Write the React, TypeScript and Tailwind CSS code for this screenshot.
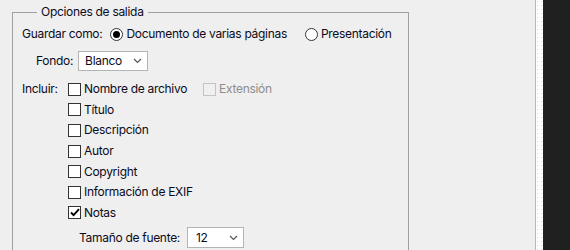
import React from "react";

const font = { fontFamily: "Inter, 'Noto Sans', sans-serif" };

function Check({ checked = false, disabled = false }: { checked?: boolean; disabled?: boolean }) {
  return (
    <span
      className={
        "inline-flex h-[13px] w-[13px] shrink-0 items-center justify-center border " +
        (disabled ? "border-[#c4c4c4] bg-[#f0f0f0]" : "border-[#333333] bg-white")
      }
    >
      {checked && (
        <svg width="10" height="9" viewBox="0 0 10 9">
          <path d="M1 4.5 L3.6 7.2 L9 1.2" fill="none" stroke="#000" strokeWidth="1.9" />
        </svg>
      )}
    </span>
  );
}

function Radio({ checked = false }: { checked?: boolean }) {
  return (
    <span className="inline-flex h-[13px] w-[13px] shrink-0 items-center justify-center rounded-full border border-[#333333] bg-white">
      {checked && <span className="h-[7px] w-[7px] rounded-full bg-black" />}
    </span>
  );
}

function Chevron() {
  return (
    <svg width="9" height="6" viewBox="0 0 9 6">
      <path d="M1 1 L4.5 4.5 L8 1" fill="none" stroke="#555" strokeWidth="1.2" />
    </svg>
  );
}

function Row({ label, checked = false }: { label: string; checked?: boolean }) {
  return (
    <div className="flex h-[20.6px] items-center pl-[55px]">
      <Check checked={checked} />
      <span className="ml-[3px]">{label}</span>
    </div>
  );
}

export default function App() {
  return (
    <div
      className="flex h-[250px] w-[570px] overflow-hidden whitespace-nowrap bg-[#efefef] text-[12px] leading-none tracking-[-0.3px] text-[#0b0b1c]"
      style={font}
    >
      <div className="flex-1">
        <fieldset className="ml-[12px] mt-[4px] h-[300px] w-[397px] border border-[#a0a0a0] pl-[9px]">
          <legend className="ml-[15px] h-[16px] px-[4px] leading-[16px] text-[#0b0b1c]">
            Opciones de salida
          </legend>
          <div className="mt-[4px] flex h-[20px] items-center">
            <span>Guardar como:</span>
            <span className="ml-[8px] flex items-center">
              <Radio checked />
              <span className="ml-[3px]">Documento de varias páginas</span>
            </span>
            <span className="ml-[18px] flex items-center">
              <Radio />
              <span className="ml-[3px]">Presentación</span>
            </span>
          </div>
          <div className="mt-[7px] flex h-[20px] items-center">
            <span className="ml-[14px]">Fondo:</span>
            <div className="ml-[5px] flex h-[20px] w-[70px] items-center justify-between border border-[#b4b4b4] bg-white pl-[6px] pr-[5px]">
              <span>Blanco</span>
              <Chevron />
            </div>
          </div>
          <div className="mt-[8px] flex h-[20.6px] items-center">
            <span className="w-[45px]">Incluir:</span>
            <span className="ml-[1px] flex items-center">
              <Check />
              <span className="ml-[3px]">Nombre de archivo</span>
            </span>
            <span className="ml-[16px] flex items-center">
              <Check disabled />
              <span className="ml-[3px] text-[#8d8d8d]">Extensión</span>
            </span>
          </div>
          <div className="-ml-[9px]">
            <Row label="Título" />
            <Row label="Descripción" />
            <Row label="Autor" />
            <Row label="Copyright" />
            <Row label="Información de EXIF" />
            <Row label="Notas" checked />
          </div>
          <div className="mt-[4px] flex h-[21px] items-center">
            <span className="ml-[57px]">Tamaño de fuente:</span>
            <div className="ml-[7px] flex h-[21px] w-[57px] items-center justify-between border border-[#b4b4b4] bg-white pl-[8px] pr-[5px]">
              <span>12</span>
              <Chevron />
            </div>
          </div>
        </fieldset>
      </div>
      <div className="w-px bg-[#b8b8b8]" />
      <div className="w-[7px] bg-white">
        <svg width="7" height="250">
          <defs>
            <pattern id="dots" width="4" height="4" patternUnits="userSpaceOnUse">
              <rect x="1" y="1" width="1" height="1" fill="#d8d8d8" />
            </pattern>
          </defs>
          <rect width="7" height="250" fill="url(#dots)" />
        </svg>
      </div>
      <div className="w-[27px] bg-[#202020]" />
    </div>
  );
}
